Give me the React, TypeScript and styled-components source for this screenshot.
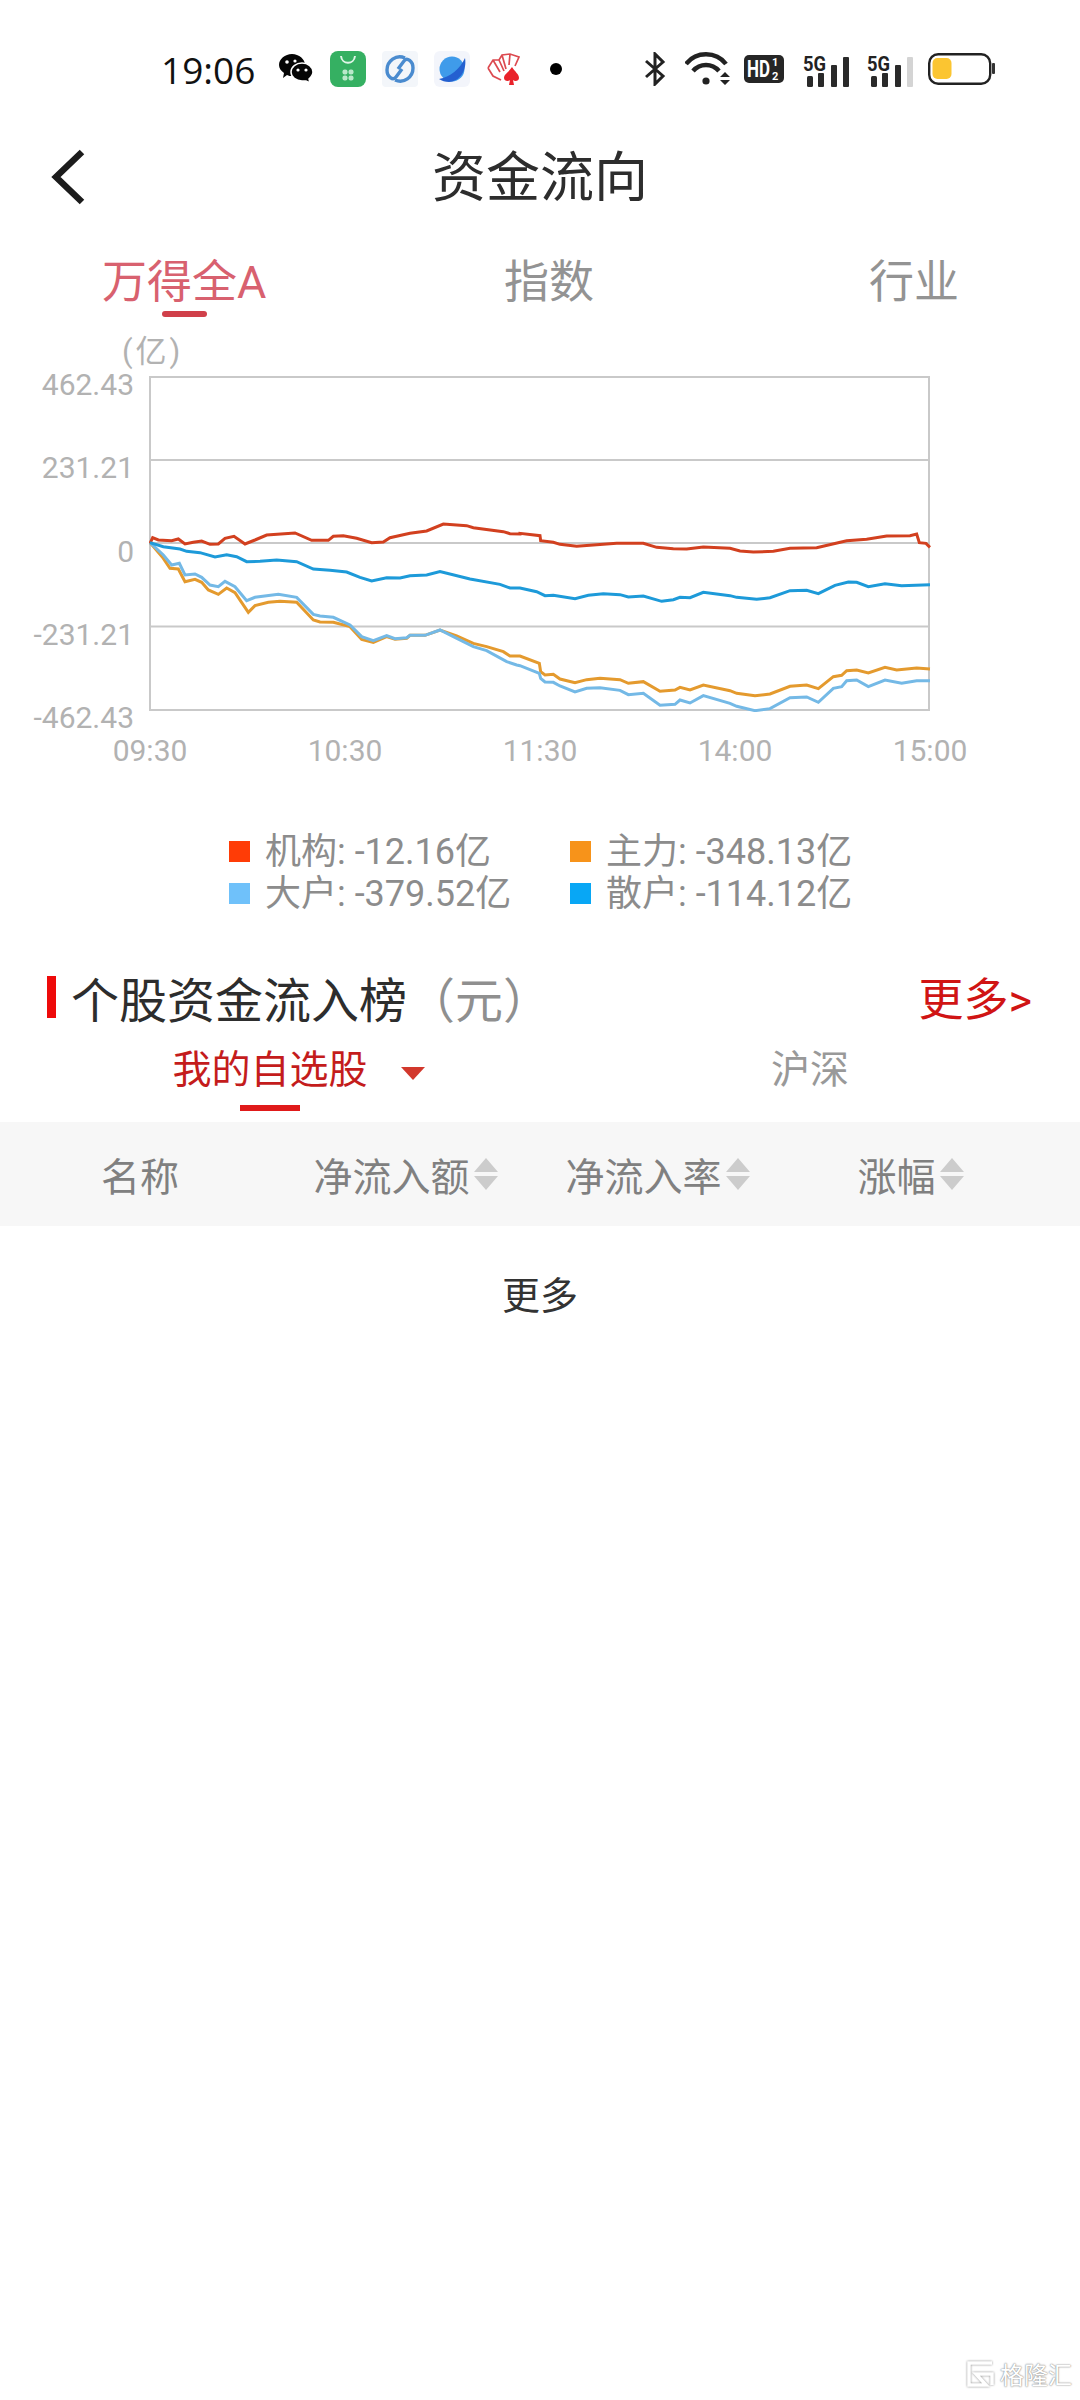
import React from 'react';
import styled, { createGlobalStyle } from 'styled-components';

const GlobalStyle = createGlobalStyle`
  html, body {
    margin: 0;
    padding: 0;
    background: #fff;
  }
  * {
    box-sizing: border-box;
  }
`;

const Page = styled.div`
  position: relative;
  width: 1080px;
  height: 2400px;
  overflow: hidden;
  background: #fff;
  font-family: Roboto, "Noto Sans CJK SC", sans-serif;
`;

const StatusBar = styled.div`
  display: flex;
  align-items: center;
  height: 138px;
  padding-left: 161px;
`;

const Clock = styled.div`
  width: 94px;
  font-family: "Open Sans", Roboto, sans-serif;
  font-size: 37px;
  color: #111;
  margin-right: 23px;
  white-space: nowrap;
`;

const AppSlot = styled.div`
  display: flex;
  justify-content: center;
  align-items: center;
  width: 36px;
  height: 36px;
  margin-right: 16px;
`;

const Dot = styled.span`
  width: 12px;
  height: 12px;
  border-radius: 50%;
  background: #000;
`;

const SysIcons = styled.div`
  display: flex;
  align-items: center;
  margin-left: 53px;
`;

const SysSlot = styled.div<{ $gap: number }>`
  display: flex;
  margin-left: ${(p) => p.$gap}px;
`;

const NavBar = styled.div`
  position: relative;
  display: flex;
  justify-content: center;
  align-items: center;
  height: 80px;
`;

const BackIcon = styled.svg`
  position: absolute;
  left: 50px;
  top: 11px;
`;

const NavTitle = styled.div`
  font-size: 54px;
  color: #2d2d2d;
  line-height: 80px;
  padding-top: 2px;
`;

const MarketTabs = styled.div`
  display: grid;
  grid-template-columns: 402px 365px auto;
  justify-items: start;
  padding: 37px 0 0 102px;
`;

const MarketTab = styled.div<{ $active?: boolean }>`
  display: flex;
  flex-direction: column;
  align-items: center;
  font-size: 45px;
  line-height: 56px;
  color: ${(p) => (p.$active ? '#d8616f' : '#939393')};
`;

const MarketMark = styled.span`
  width: 45px;
  height: 6px;
  border-radius: 3px;
  background: #d0404a;
`;

const UnitLabel = styled.div`
  margin-top: 18px;
  padding-left: 122px;
  height: 28px;
  font-size: 31px;
  letter-spacing: 3px;
  line-height: 34px;
  color: #b2b2b2;
`;

const ChartRow = styled.div`
  display: flex;
`;

const YAxis = styled.div`
  display: flex;
  flex-direction: column;
  justify-content: space-between;
  align-items: flex-end;
  width: 134px;
  height: 375px;
  margin-top: 1px;
`;

const AxisText = styled.span`
  font-size: 30px;
  line-height: 42px;
  color: #b2b2b2;
`;

const Plot = styled.svg`
  display: block;
  margin: 13px 0 0 15px;
`;

const XAxis = styled.div`
  display: flex;
  justify-content: space-between;
  width: 880px;
  margin-left: 100px;
`;

const XLabel = styled.span`
  width: 100px;
  text-align: center;
  font-size: 30px;
  line-height: 24px;
  color: #b2b2b2;
`;

const Legend = styled.div`
  display: grid;
  grid-template-columns: 341px 341px;
  margin: 64px 0 0 229px;
`;

const LegendItem = styled.div`
  display: flex;
  align-items: center;
  gap: 15px;
  height: 42px;
  font-size: 36px;
  color: #8c8c8c;
  white-space: nowrap;
`;

const Swatch = styled.span<{ $color: string }>`
  width: 21px;
  height: 21px;
  margin-top: 6px;
  background: ${(p) => p.$color};
`;

const SectionHead = styled.div`
  display: flex;
  align-items: center;
  height: 60px;
  margin-top: 56px;
  padding: 0 48px 0 47px;
`;

const SectionBar = styled.span`
  width: 9px;
  height: 42px;
  margin-right: 15px;
  background: #ee0a0a;
`;

const SectionTitle = styled.div`
  flex: 1;
  font-size: 48px;
  color: #2d2d2d;
  white-space: nowrap;
`;

const SectionUnit = styled.span`
  color: #8f8f8f;
`;

const MoreLink = styled.div`
  padding-bottom: 1px;
  font-size: 45px;
  color: #d01414;
`;

const ListTabs = styled.div`
  display: grid;
  grid-template-columns: 540px 540px;
  height: 84px;
  padding-top: 18px;
`;

const ListTab = styled.div<{ $active?: boolean }>`
  display: flex;
  flex-direction: column;
  align-items: center;
  font-size: 39px;
  line-height: 50px;
  color: ${(p) => (p.$active ? '#c41c1c' : '#999')};
`;

const TabLabel = styled.span`
  position: relative;
`;

const TabCaret = styled.span`
  position: absolute;
  left: calc(100% + 33px);
  top: 22px;
  width: 0;
  height: 0;
  border-left: 12px solid transparent;
  border-right: 12px solid transparent;
  border-top: 13px solid #d2382c;
`;

const ListMark = styled.span`
  width: 60px;
  height: 6px;
  margin-top: 10px;
  background: #e01a1a;
`;

const TableHead = styled.div`
  display: grid;
  grid-template-columns: 280px 252px 252px 254px;
  align-items: center;
  height: 104px;
  margin-top: 11px;
  background: #f7f7f7;
`;

const HeadCell = styled.div`
  display: flex;
  justify-content: center;
  align-items: center;
  gap: 3px;
  font-size: 39px;
  color: #808080;
  white-space: nowrap;
`;

const SortIcon = styled.svg`
  flex: none;
`;

const BottomMore = styled.div`
  height: 138px;
  text-align: center;
  font-size: 38px;
  line-height: 140px;
  color: #333;
`;

const Watermark = styled.div`
  position: absolute;
  right: 8px;
  bottom: 9px;
  display: flex;
  align-items: center;
  gap: 5px;
  font-size: 24px;
  color: #fff;
  text-shadow: 0 0 2px #8a8a8a, 0 0 1px #8a8a8a;
`;

const MarkLogo = styled.svg`
  filter: drop-shadow(0 0 1px #8a8a8a);
`;

type Pt = [number, number];

// traced from the chart, in two crops: x and y are in 3x crop pixels
const toFull = (pts: Pt[], originX: number) => pts.map(([x, y]) => `${originX + x / 3},${370 + y / 3}`).join(' ');

const series = (left: Pt[], right: Pt[]) => `${toFull(left, 130)} ${toFull(right, 520)}`;

const institution = series(
  [[60, 520], [68, 503], [85, 510], [125, 512], [145, 507], [165, 522], [190, 517], [215, 513], [240, 523], [265, 522], [285, 505], [312, 499], [345, 522], [375, 510], [410, 495], [495, 489], [545, 511], [595, 511], [610, 499], [640, 497], [680, 505], [725, 518], [760, 516], [780, 503], [840, 490], [890, 483], [940, 462], [1010, 467], [1030, 473], [1120, 485], [1140, 491], [1170, 492]],
  [[0, 490], [60, 497], [62, 512], [100, 517], [120, 523], [170, 529], [290, 520], [370, 520], [410, 532], [460, 536], [500, 537], [550, 531], [630, 535], [660, 543], [700, 546], [760, 544], [810, 535], [890, 533], [980, 512], [1040, 508], [1100, 498], [1170, 497], [1190, 492], [1198, 518], [1218, 520], [1230, 532]],
);

const retail = series(
  [[60, 518], [100, 530], [150, 537], [170, 544], [210, 548], [255, 561], [290, 554], [320, 560], [350, 575], [390, 574], [440, 570], [500, 575], [550, 597], [600, 601], [650, 606], [690, 622], [725, 633], [770, 623], [810, 624], [840, 617], [890, 615], [930, 605], [1020, 627], [1110, 643], [1140, 654]],
  [[0, 654], [50, 665], [75, 677], [100, 676], [165, 686], [205, 676], [250, 671], [300, 674], [325, 681], [370, 678], [425, 694], [460, 689], [480, 682], [510, 683], [550, 667], [630, 677], [650, 682], [710, 688], [750, 683], [810, 662], [860, 661], [895, 671], [945, 646], [985, 636], [1010, 637], [1045, 650], [1095, 641], [1145, 647], [1230, 644]],
);

const mainForce = series(
  [[60, 518], [100, 565], [120, 595], [145, 597], [165, 635], [195, 628], [215, 637], [235, 660], [265, 673], [290, 654], [315, 668], [355, 727], [375, 707], [415, 697], [450, 694], [500, 697], [550, 750], [570, 756], [610, 757], [660, 770], [695, 808], [730, 817], [770, 800], [795, 808], [830, 805], [840, 796], [885, 796], [930, 780], [980, 798], [1030, 820], [1070, 830], [1120, 845], [1140, 858]],
  [[0, 858], [58, 880], [62, 905], [75, 915], [100, 913], [120, 927], [165, 938], [200, 929], [240, 925], [300, 929], [325, 940], [370, 935], [420, 964], [465, 960], [480, 952], [510, 960], [550, 945], [630, 962], [650, 970], [705, 977], [750, 972], [810, 949], [860, 945], [895, 956], [940, 920], [965, 916], [980, 902], [1010, 900], [1045, 909], [1095, 892], [1130, 900], [1190, 894], [1230, 897]],
);

const large = series(
  [[60, 518], [100, 555], [125, 585], [148, 580], [165, 615], [195, 612], [215, 622], [240, 645], [265, 650], [285, 634], [315, 650], [350, 692], [375, 682], [410, 677], [445, 673], [500, 682], [550, 733], [570, 738], [610, 742], [660, 765], [695, 800], [730, 812], [770, 797], [795, 806], [830, 803], [840, 796], [885, 796], [930, 780], [970, 800], [1030, 830], [1070, 842], [1130, 875], [1160, 885]],
  [[0, 887], [58, 910], [62, 925], [75, 936], [100, 937], [120, 948], [165, 966], [200, 955], [240, 953], [300, 961], [325, 974], [370, 970], [420, 1006], [465, 1003], [480, 990], [510, 999], [550, 977], [630, 1000], [650, 1009], [705, 1022], [750, 1016], [810, 983], [860, 981], [895, 997], [940, 955], [965, 950], [980, 932], [1010, 930], [1045, 950], [1095, 930], [1145, 940], [1190, 932], [1230, 932]],
);

const yLabels = ['462.43', '231.21', '0', '-231.21', '-462.43'];
const xLabels = ['09:30', '10:30', '11:30', '14:00', '15:00'];
const legendItems = [
  { color: '#ff3c06', text: '机构: -12.16亿' },
  { color: '#f7931a', text: '主力: -348.13亿' },
  { color: '#6fc1fa', text: '大户: -379.52亿' },
  { color: '#08a7f5', text: '散户: -114.12亿' },
];

const Sort = () => (
  <SortIcon width="26" height="32" viewBox="0 0 26 32">
    <path d="M13 0 L25 14 H1 Z M1 18 H25 L13 32 Z" fill="#cccccc" />
  </SortIcon>
);

const Bars = ({ dim }: { dim?: boolean }) => (
  <svg width="48" height="38" viewBox="0 -6 48 38">
    <text x="1" y="15" fontFamily="Roboto, sans-serif" fontSize="20" fontWeight="700" fill="#222" textLength="23" lengthAdjust="spacingAndGlyphs">5G</text>
    <rect x="5" y="20" width="6" height="11" rx="1.5" fill="#2a2a2a" />
    <rect x="16" y="17" width="6" height="14" rx="1" fill="#2a2a2a" />
    <rect x="29" y="9" width="6" height="22" rx="1" fill="#2a2a2a" />
    <rect x="41" y="1" width="6" height="30" rx="1" fill={dim ? '#d4d4d4' : '#2a2a2a'} />
  </svg>
);

const App: React.FC = () => {
  return (
    <Page>
      <GlobalStyle />
      <StatusBar>
        <Clock>19:06</Clock>
        <AppSlot>
          <svg width="34" height="30" viewBox="0 0 34 30">
            <path d="M13 0 C20 0 26 5 26 11 C26 17 20 22 13 22 C11 22 10 22 8 21 L4 24 L5 19 C2 17 0 14 0 11 C0 5 6 0 13 0 Z" fill="#050505" />
            <path d="M23 9 C29 9 34 13 34 18 C34 21 32 23 30 25 L31 29 L27 27 C26 27 24 27 23 27 C17 27 12 23 12 18 C12 13 17 9 23 9 Z" fill="#050505" stroke="#fff" strokeWidth="1.5" />
            <circle cx="8" cy="8" r="1.8" fill="#fff" />
            <circle cx="16" cy="7" r="1.6" fill="#fff" />
            <circle cx="19" cy="16" r="1.6" fill="#fff" />
            <circle cx="27" cy="16" r="1.6" fill="#fff" />
          </svg>
        </AppSlot>
        <AppSlot>
          <svg width="36" height="36" viewBox="0 0 36 36">
            <rect width="36" height="36" rx="8" fill="#35b062" />
            <path d="M11 5 C12 14 24 14 25 5" fill="none" stroke="#dff5e7" strokeWidth="2" />
            <rect x="12.5" y="18.5" width="5" height="5" rx="2" fill="#b9e8ca" />
            <rect x="18.5" y="18.5" width="5" height="5" rx="2" fill="#b9e8ca" />
            <rect x="12.5" y="24.5" width="5" height="5" rx="2" fill="#b9e8ca" />
            <rect x="18.5" y="24.5" width="5" height="5" rx="2" fill="#b9e8ca" />
          </svg>
        </AppSlot>
        <AppSlot>
          <svg width="36" height="36" viewBox="0 0 36 36">
            <rect width="36" height="36" rx="4" fill="#f3f6fa" />
            <path d="M23 7 C14 3 5 10 5 19 C5 26 11 30 14 26 L20 18" fill="none" stroke="#4a8bcf" strokeWidth="3.4" />
            <path d="M13 29 C22 33 31 26 31 17 C31 10 25 6 22 10 L16 18" fill="none" stroke="#4a8bcf" strokeWidth="3.4" />
          </svg>
        </AppSlot>
        <AppSlot>
          <svg width="36" height="36" viewBox="0 0 36 36">
            <rect width="36" height="36" rx="6" fill="#f3f5fb" />
            <circle cx="18" cy="18" r="12.5" fill="#3f9bea" />
            <path d="M5 28 C16 26 26 18 31 7 C33 18 27 30 15 31 C11 31 8 30 5 28 Z" fill="#2460d0" />
          </svg>
        </AppSlot>
        <AppSlot>
          <svg width="36" height="36" viewBox="0 0 36 36">
            <path d="M2 17 L7 9 L13 9 L16 4 L24 3 L33 6 L29 15 M2 17 L7 25 L15 29 M7 9 L14 21 M13 9 L18 20 M16 4 L20 18 M24 3 L23 14" fill="none" stroke="#dc4a50" strokeWidth="1.7" />
            <path d="M26 16 C29 21 33 23 33 27 C33 30 29 31 27 29 L28 34 H23 L24 29 C22 31 18 30 18 27 C18 23 23 21 26 16 Z" fill="#e9222a" />
          </svg>
        </AppSlot>
        <AppSlot>
          <Dot />
        </AppSlot>
        <SysIcons>
          <SysSlot $gap={0}>
            <svg width="24" height="34" viewBox="0 0 24 34">
              <path d="M3 9 L20 24 L12 32 V2 L20 10 L3 25" fill="none" stroke="#222" strokeWidth="3" />
            </svg>
          </SysSlot>
          <SysSlot $gap={18}>
            <svg width="46" height="34" viewBox="0 0 46 34">
              <path d="M1 12 C11 -1 31 -1 41 12" fill="none" stroke="#222" strokeWidth="4.5" />
              <path d="M8 19 C15 11 27 11 34 19" fill="none" stroke="#222" strokeWidth="4.5" />
              <circle cx="21" cy="29" r="3.6" fill="#222" />
              <path d="M35 25 L40 20 L45 25 Z M35 28 H45 L40 33 Z" fill="#222" />
            </svg>
          </SysSlot>
          <SysSlot $gap={13}>
            <svg width="40" height="28" viewBox="0 0 40 28">
              <rect width="40" height="28" rx="5" fill="#262626" />
              <text x="3" y="22" fontFamily="Roboto, sans-serif" fontSize="23" fontWeight="700" fill="#fff" textLength="23" lengthAdjust="spacingAndGlyphs">HD</text>
              <text x="28" y="10.5" fontFamily="Roboto, sans-serif" fontSize="11" fontWeight="700" fill="#fff">1</text>
              <text x="28" y="25" fontFamily="Roboto, sans-serif" fontSize="11" fontWeight="700" fill="#fff">2</text>
            </svg>
          </SysSlot>
          <SysSlot $gap={18}>
            <Bars />
          </SysSlot>
          <SysSlot $gap={16}>
            <Bars dim />
          </SysSlot>
          <SysSlot $gap={14}>
            <svg width="68" height="32" viewBox="0 0 68 32">
              <rect x="1.2" y="1.2" width="61" height="29.6" rx="9" fill="#fff" stroke="#222" strokeWidth="2.4" />
              <rect x="4.5" y="5" width="19" height="21" rx="5" fill="#fbc531" />
              <rect x="64" y="10" width="3" height="11" rx="1" fill="#333" />
            </svg>
          </SysSlot>
        </SysIcons>
      </StatusBar>

      <NavBar>
        <BackIcon width="36" height="58" viewBox="0 0 36 58">
          <path d="M32 3 L6 28 L32 53" fill="none" stroke="#1c1c1c" strokeWidth="6.5" />
        </BackIcon>
        <NavTitle>资金流向</NavTitle>
      </NavBar>

      <MarketTabs>
        <MarketTab $active>
          万得全A
          <MarketMark />
        </MarketTab>
        <MarketTab>指数</MarketTab>
        <MarketTab>行业</MarketTab>
      </MarketTabs>

      <UnitLabel>(亿)</UnitLabel>
      <ChartRow>
        <YAxis>
          {yLabels.map((label) => (
            <AxisText key={label}>{label}</AxisText>
          ))}
        </YAxis>
        <Plot width="782" height="336" viewBox="149 376 782 336">
          <rect x="150" y="377" width="779" height="333" fill="none" stroke="#c9c9c9" strokeWidth="2" />
          <path d="M150 460 H929 M150 543 H929 M150 626.5 H929" stroke="#c9c9c9" strokeWidth="2" />
          <polyline points={mainForce} fill="none" stroke="#e49a2e" strokeWidth="3" />
          <polyline points={large} fill="none" stroke="#74b9e6" strokeWidth="3" />
          <polyline points={institution} fill="none" stroke="#d2401f" strokeWidth="3" />
          <polyline points={retail} fill="none" stroke="#1d9ad9" strokeWidth="3" />
        </Plot>
      </ChartRow>
      <XAxis>
        {xLabels.map((label) => (
          <XLabel key={label}>{label}</XLabel>
        ))}
      </XAxis>

      <Legend>
        {legendItems.map((item) => (
          <LegendItem key={item.text}>
            <Swatch $color={item.color} />
            {item.text}
          </LegendItem>
        ))}
      </Legend>

      <SectionHead>
        <SectionBar />
        <SectionTitle>
          个股资金流入榜<SectionUnit>（元）</SectionUnit>
        </SectionTitle>
        <MoreLink>更多&gt;</MoreLink>
      </SectionHead>

      <ListTabs>
        <ListTab $active>
          <TabLabel>
            我的自选股
            <TabCaret />
          </TabLabel>
          <ListMark />
        </ListTab>
        <ListTab>沪深</ListTab>
      </ListTabs>

      <TableHead>
        <HeadCell>名称</HeadCell>
        <HeadCell>
          净流入额
          <Sort />
        </HeadCell>
        <HeadCell>
          净流入率
          <Sort />
        </HeadCell>
        <HeadCell>
          涨幅
          <Sort />
        </HeadCell>
      </TableHead>

      <BottomMore>更多</BottomMore>

      <Watermark>
        <MarkLogo width="29" height="28" viewBox="0 0 29 28">
          <path d="M26 3 H3 V25 H20 L10 14 H26 V25" fill="none" stroke="#fff" strokeWidth="3.5" />
        </MarkLogo>
        格隆汇
      </Watermark>
    </Page>
  );
};

export default App;
